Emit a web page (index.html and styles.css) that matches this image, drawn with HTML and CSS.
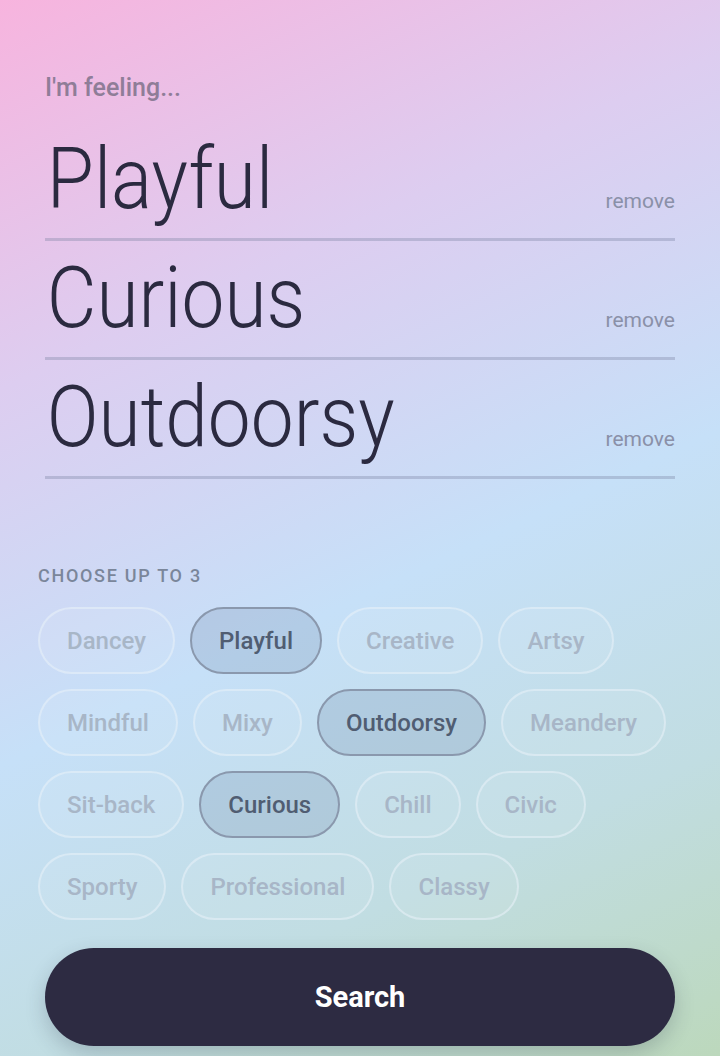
FILE: index.html
```html
<!DOCTYPE html>
<html lang="en">
<head>
    <meta charset="UTF-8">
    <meta name="viewport" content="width=device-width, initial-scale=1.0">
    <title>Mood Search</title>
    <link rel="stylesheet" href="styles.css">
</head>
<body>
    <div class="page">
        <div class="picked">
            <p class="picked-label">I'm feeling...</p>
            <div class="mood-row">
                <span class="mood-word">Playful</span>
                <span class="remove-link">remove</span>
            </div>
            <div class="mood-row">
                <span class="mood-word">Curious</span>
                <span class="remove-link">remove</span>
            </div>
            <div class="mood-row">
                <span class="mood-word">Outdoorsy</span>
                <span class="remove-link">remove</span>
            </div>
        </div>

        <div class="choices">
            <h2 class="choices-title">CHOOSE UP TO 3</h2>
            <div class="chip-list">
                <span class="chip">Dancey</span>
                <span class="chip selected">Playful</span>
                <span class="chip">Creative</span>
                <span class="chip">Artsy</span>
                <span class="chip">Mindful</span>
                <span class="chip">Mixy</span>
                <span class="chip selected">Outdoorsy</span>
                <span class="chip">Meandery</span>
                <span class="chip">Sit-back</span>
                <span class="chip selected">Curious</span>
                <span class="chip">Chill</span>
                <span class="chip">Civic</span>
                <span class="chip">Sporty</span>
                <span class="chip">Professional</span>
                <span class="chip">Classy</span>
            </div>
        </div>

        <button class="search-button">Search</button>
    </div>
</body>
</html>
```

FILE: styles.css
```css
body {
    font-family: Roboto, 'Noto Sans', sans-serif;
    margin: 0;
    padding: 0;
    min-height: 100vh;
    background: linear-gradient(155deg, #f7b4de 0%, #ddcdf0 28%, #c6e0f8 55%, #c1dde2 78%, #bcd8bc 100%);
}

.page {
    height: 1056px;
    box-sizing: border-box;
    padding-top: 74px;
    display: flex;
    flex-direction: column;
}

.picked {
    padding: 0 45px;
}

.picked-label {
    margin: 0 0 20px;
    font-size: 25px;
    font-weight: 500;
    line-height: 28px;
    color: #8f7d98;
}

.mood-row {
    display: flex;
    justify-content: space-between;
    align-items: baseline;
    padding: 14px 0 16px;
    border-bottom: 3px solid rgba(120, 130, 160, 0.35);
}

/* the big words are set narrower than plain Roboto Light */
.mood-word {
    display: inline-block;
    font-size: 86px;
    font-weight: 300;
    line-height: 1;
    color: #2b2a40;
    padding-left: 2px;
    transform: scaleX(0.89);
    transform-origin: left center;
}

.remove-link {
    font-size: 21px;
    color: #8a90a8;
    cursor: pointer;
}

.choices {
    padding: 0 38px;
    margin-top: 87px;
}

.choices-title {
    margin: 0 0 21px;
    font-size: 18px;
    font-weight: 500;
    line-height: 20px;
    letter-spacing: 1.7px;
    color: #7a869a;
}

.chip-list {
    display: flex;
    flex-wrap: wrap;
    gap: 15px;
}

.chip {
    height: 67px;
    box-sizing: border-box;
    padding: 0 27px;
    display: flex;
    align-items: center;
    border: 2px solid rgba(232, 240, 248, 0.55);
    border-radius: 34px;
    background-color: rgba(255, 255, 255, 0.08);
    font-size: 24px;
    font-weight: 500;
    color: #a8b6c7;
}

.chip.selected {
    background-color: rgba(100, 125, 160, 0.2);
    border-color: #8a98ad;
    color: #505d72;
}

.search-button {
    margin: 28px 45px 0;
    height: 98px;
    border: none;
    border-radius: 49px;
    background-color: #2d2b42;
    color: white;
    font-family: inherit;
    font-size: 29px;
    font-weight: 700;
    cursor: pointer;
    box-shadow: 0 8px 20px rgba(40, 50, 70, 0.22);
}
```
